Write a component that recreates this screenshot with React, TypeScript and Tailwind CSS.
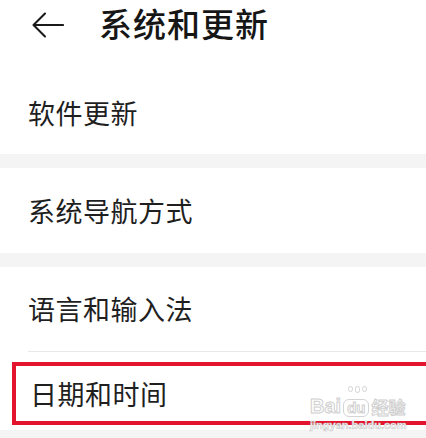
import React from "react";

const font = "font-['Noto_Sans_CJK_SC','Noto_Sans',sans-serif]";

function BackArrow() {
  return (
    <svg width="32" height="26" viewBox="0 0 32 26" fill="none" stroke="#1a1a1a" strokeWidth="2.1" strokeLinecap="round" strokeLinejoin="round">
      <path d="M31 13H2" />
      <path d="M13 1.5L1.5 13L13 24.5" />
    </svg>
  );
}

function Row({ label, className = "" }: { label: string; className?: string }) {
  return (
    <div className={`flex items-center pl-[28px] bg-white ${className}`}>
      <span className="text-[27px] leading-[34px] text-[#1f1f1f] tracking-[0.5px]">{label}</span>
    </div>
  );
}

function Watermark() {
  return (
    <div className="absolute left-[310px] top-[395px] flex flex-col items-start pointer-events-none">
      <div className="flex items-end gap-[2px] text-white [-webkit-text-stroke:1px_#cfcfcf] font-['Liberation_Sans',sans-serif] font-bold">
        <span className="text-[20px] leading-[22px]">Bai</span>
        <span className="relative text-[15px] leading-[16px] px-[3px] rounded-[6px] border border-[#d4d4d4]">
          du
          <span className="absolute -top-[14px] left-[4px] flex gap-[2px]">
            <span className="w-[5px] h-[6px] rounded-full border border-[#d4d4d4]" />
            <span className="w-[5px] h-[7px] rounded-full border border-[#d4d4d4]" />
            <span className="w-[5px] h-[6px] rounded-full border border-[#d4d4d4]" />
          </span>
        </span>
        <span className={`text-[17px] leading-[20px] ${font}`}>经验</span>
      </div>
      <span className="text-[11px] leading-[13px] mt-[2px] text-white [-webkit-text-stroke:0.6px_#c8c8c8] font-['Liberation_Sans',sans-serif] font-bold">
        jingyan.baidu.com
      </span>
    </div>
  );
}

export default function App() {
  return (
    <div className={`relative w-[426px] h-[438px] overflow-hidden bg-[#f4f4f4] ${font}`}>
      <header className="flex items-center h-[46px] bg-white">
        <div className="ml-[32px] mt-[4px] w-[32px] flex items-center">
          <BackArrow />
        </div>
        <h1 className="ml-[35px] text-[33px] leading-[46px] font-medium text-[#161616] tracking-[1px]">系统和更新</h1>
      </header>

      <Row label="软件更新" className="h-[108px] !items-start pt-[50px]" />
      <div className="h-[14px]" />
      <Row label="系统导航方式" className="h-[85px]" />
      <div className="h-[14px]" />
      <Row label="语言和输入法" className="h-[84px]" />
      <div className="bg-white">
        <div className="ml-[28px] h-[1px] bg-[#e8e8e8]" />
      </div>

      <div className="bg-white pt-[10px] pb-[5px]">
        <div className="ml-[12px] -mr-[4px] h-[63px] border-[4px] border-[#e3142e] flex items-center pl-[14px]">
          <span className="text-[27px] leading-[34px] text-[#1f1f1f] tracking-[0.5px]">日期和时间</span>
        </div>
      </div>

      <Watermark />
    </div>
  );
}
